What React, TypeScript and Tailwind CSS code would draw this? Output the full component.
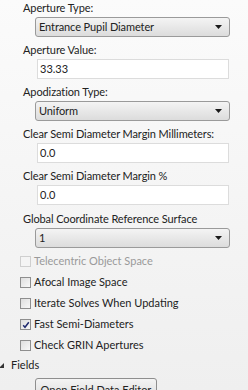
const font = { fontFamily: 'Lato, "Open Sans", sans-serif' };

const Arrow = () => (
  <svg width="7" height="4" viewBox="0 0 7 4" className="mr-[7px] shrink-0">
    <path d="M0 0h7L3.5 4z" fill="#1a1a1a" />
  </svg>
);

const Label = ({ children }: { children: string }) => (
  <div className="h-[16px] pl-[23px] text-[11px] leading-[16px] tracking-[-0.1px] text-[#222]">{children}</div>
);

const Select = ({ value }: { value: string }) => (
  <div className="ml-[35px] mr-[18px] mt-[1px] flex h-[20px] items-center justify-between rounded-[3px] border border-[#9a9a9a] bg-gradient-to-b from-[#f4f4f4] to-[#dcdcdc] pl-[3px] text-[11px] tracking-[-0.1px] text-[#222]">
    <span>{value}</span>
    <Arrow />
  </div>
);

const Input = ({ value }: { value: string }) => (
  <div className="ml-[37px] mr-[19px] mt-[1px] flex h-[20px] items-center border border-[#dcdcdc] bg-white pl-[2px] text-[11px] text-[#222]">
    {value}
  </div>
);

const Check = ({ label, checked, disabled }: { label: string; checked?: boolean; disabled?: boolean }) => (
  <div className="flex h-[21px] items-center pl-[20px]">
    <div
      className={`flex h-[11px] w-[11px] items-center justify-center border ${
        disabled ? "border-[#cfcfcf] bg-[#f4f4f4]" : "border-[#8e8e8e] bg-gradient-to-br from-[#dedede] to-[#f8f8f8]"
      }`}
    >
      {checked && (
        <svg width="8" height="8" viewBox="0 0 8 8">
          <path d="M1.2 4.2 3 6.3 6.8 1.2" fill="none" stroke="#1f2a6e" strokeWidth="1.5" />
        </svg>
      )}
    </div>
    <span className={`ml-[3px] text-[11px] ${disabled ? "text-[#9a9a9a]" : "text-[#222]"}`}>{label}</span>
  </div>
);

export default function App() {
  return (
    <div className="h-[390px] w-[248px] overflow-hidden bg-gradient-to-b from-[#fbfbfb] to-[#efefef]" style={font}>
      <div className="flex flex-col pt-0">
        <Label>Aperture Type:</Label>
        <Select value="Entrance Pupil Diameter" />
        <div className="mt-[5px]">
          <Label>Aperture Value:</Label>
          <Input value="33.33" />
        </div>
        <div className="mt-[5px]">
          <Label>Apodization Type:</Label>
          <Select value="Uniform" />
        </div>
        <div className="mt-[5px]">
          <Label>Clear Semi Diameter Margin Millimeters:</Label>
          <Input value="0.0" />
        </div>
        <div className="mt-[5px]">
          <Label>Clear Semi Diameter Margin %</Label>
          <Input value="0.0" />
        </div>
        <div className="mt-[6px]">
          <Label>Global Coordinate Reference Surface</Label>
          <Select value="1" />
        </div>
        <div className="mt-[3px]">
          <Check label="Telecentric Object Space" disabled />
          <Check label="Afocal Image Space" />
          <Check label="Iterate Solves When Updating" />
          <Check label="Fast Semi-Diameters" checked />
          <Check label="Check GRIN Apertures" />
        </div>
        <div className="flex h-[18px] items-center">
          <svg width="5" height="5" viewBox="0 0 5 5" className="-ml-[1px]">
            <path d="M5 0v5H0z" fill="#333" />
          </svg>
          <span className="ml-[7px] text-[11px] text-[#222]">Fields</span>
        </div>
        <div className="ml-[35px] mt-[4px] flex h-[22px] w-[122px] items-start justify-center rounded-[3px] border border-[#8e8e8e] bg-gradient-to-b from-[#f4f4f4] to-[#dcdcdc] pt-[3px] text-[11px] text-[#222]">
          Open Field Data Editor
        </div>
      </div>
    </div>
  );
}
